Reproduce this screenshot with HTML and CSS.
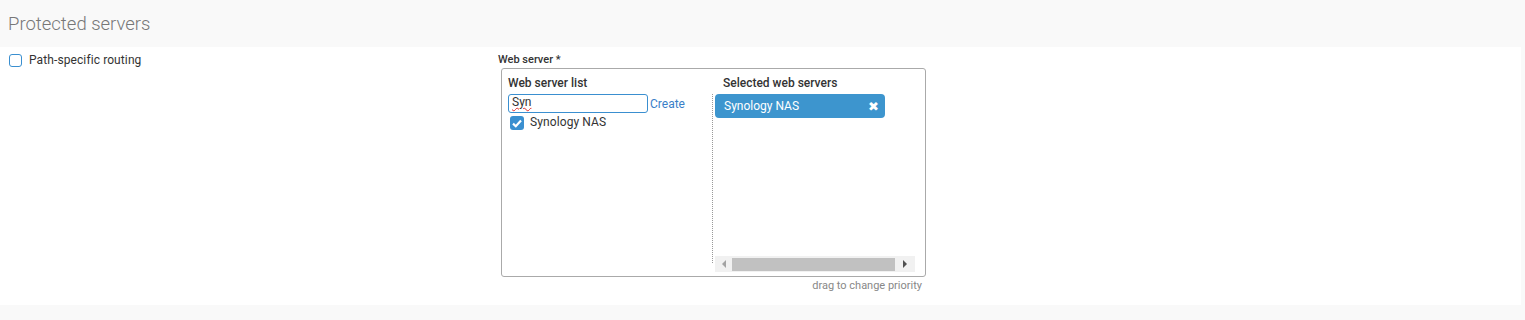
FILE: index.html
```html
<!DOCTYPE html>
<html lang="en">
<head>
    <meta charset="UTF-8">
    <title>Protected servers</title>
    <link rel="stylesheet" href="styles.css">
</head>
<body>

    <!-- Section header -->
    <div class="page-head">
        <h1>Protected servers</h1>
    </div>

    <div class="panel">
        <div class="left-col">
            <label class="check-row">
                <span class="checkbox"></span>
                <span>Path-specific routing</span>
            </label>
        </div>

        <div class="right-col">
            <div class="field-label">Web server *</div>
            <div class="picker">
                <!-- Available list -->
                <div class="pane-left">
                    <div class="pane-title">Web server list</div>
                    <div class="search-row">
                        <div class="search-box"><span class="typo">Syn</span></div>
                        <a href="#" class="create-link">Create</a>
                    </div>
                    <label class="check-row item">
                        <span class="checkbox checked">
                            <svg width="10" height="9" viewBox="0 0 10 9"><path d="M1 4.6 L3.8 7.2 L9 1.6" fill="none" stroke="#fff" stroke-width="2.2"/></svg>
                        </span>
                        <span class="item-text">Synology NAS</span>
                    </label>
                </div>

                <!-- Selected list -->
                <div class="pane-right">
                    <div class="pane-title sel-title">Selected web servers</div>
                    <div class="sel-list">
                        <div class="tag">
                            <span>Synology NAS</span>
                            <span class="tag-x">&#10006;</span>
                        </div>
                    </div>
                    <div class="hscroll">
                        <span class="arrow arrow-left"></span>
                        <span class="thumb"></span>
                        <span class="arrow arrow-right"></span>
                    </div>
                </div>
            </div>
            <div class="hint">drag to change priority</div>
        </div>
    </div>

</body>
</html>
```

FILE: styles.css
```css
body {
    margin: 0;
    background-color: #f9f9f9;
    font-family: Roboto, "Liberation Sans", sans-serif;
    color: #333;
}

.page-head {
    height: 47px;
    padding-left: 8px;
    display: flex;
    align-items: center;
}

.page-head h1 {
    margin: 0;
    font-size: 18.5px;
    font-weight: 300;
    color: #777;
}

.panel {
    background-color: #fff;
    width: 1521px;
    height: 258px;
    display: flex;
}

.left-col {
    width: 489px;
    padding: 6px 0 0 9px;
}

.check-row {
    display: flex;
    align-items: center;
    font-size: 12px;
    line-height: 14px;
    letter-spacing: 0.1px;
}

.checkbox {
    width: 11px;
    height: 11px;
    border: 1.5px solid #3a8fd0;
    border-radius: 3px;
    margin-right: 7px;
    display: flex;
    align-items: center;
    justify-content: center;
    flex-shrink: 0;
}

.checkbox.checked {
    width: 14px;
    height: 14px;
    border: none;
    background-color: #3a8fd0;
    margin-right: 6px;
}

.right-col {
    padding-top: 6px;
}

.field-label {
    font-size: 11px;
    font-weight: 500;
    line-height: 13px;
    color: #333;
}

.picker {
    margin: 2px 0 0 3px;
    width: 423px;
    height: 207px;
    border: 1px solid #aaa;
    border-radius: 3px;
    display: flex;
}

.pane-left {
    width: 204px;
    padding: 7px 0 0 6px;
}

.pane-title {
    font-size: 12px;
    font-weight: 500;
    line-height: 15px;
    color: #333;
}

.search-row {
    display: flex;
    align-items: center;
    margin-top: 3px;
}

.search-box {
    width: 135px;
    height: 17px;
    border: 1px solid #3a8fd0;
    border-radius: 3px;
    padding-left: 3px;
    font-size: 12px;
    line-height: 15px;
    color: #333;
}

.typo {
    text-decoration: underline wavy #e03030;
    text-decoration-thickness: 1px;
    text-underline-offset: 1px;
}

.create-link {
    margin-left: 2px;
    font-size: 12px;
    color: #3a7fc8;
    text-decoration: none;
}

.item {
    margin: 3px 0 0 2px;
    align-items: flex-start;
}

.item-text {
    margin-top: -1px;
}

.pane-right {
    flex: 1;
    display: flex;
    flex-direction: column;
    padding: 7px 10px 4px 0;
}

.sel-title {
    padding-left: 11px;
}

.sel-list {
    flex: 1;
    margin-top: 3px;
    border-left: 1px dotted #999;
    margin-bottom: -7px;
    padding-left: 2px;
}

.tag {
    width: 161px;
    height: 24px;
    padding-left: 9px;
    background-color: #3d95ce;
    border-radius: 4px;
    color: #fff;
    font-size: 12px;
    display: flex;
    align-items: center;
    justify-content: space-between;
}

.tag-x {
    font-size: 13px;
    margin-right: 6px;
}

.hscroll {
    margin-left: 3px;
    height: 16px;
    background-color: #f1f1f1;
    display: flex;
    align-items: center;
    position: relative;
}

.arrow {
    width: 17px;
    display: flex;
    justify-content: center;
}

.arrow-left::before {
    content: "";
    border-style: solid;
    border-width: 4px 4px 4px 0;
    border-color: transparent #a3a3a3 transparent transparent;
}

.arrow-right {
    width: 20px;
}

.arrow-right::before {
    content: "";
    border-style: solid;
    border-width: 4px 0 4px 4px;
    border-color: transparent transparent transparent #505050;
}

.thumb {
    width: 163px;
    height: 13px;
    background-color: #c1c1c1;
}

.hint {
    width: 424px;
    margin-top: 2px;
    text-align: right;
    font-size: 11px;
    color: #888;
}
```
